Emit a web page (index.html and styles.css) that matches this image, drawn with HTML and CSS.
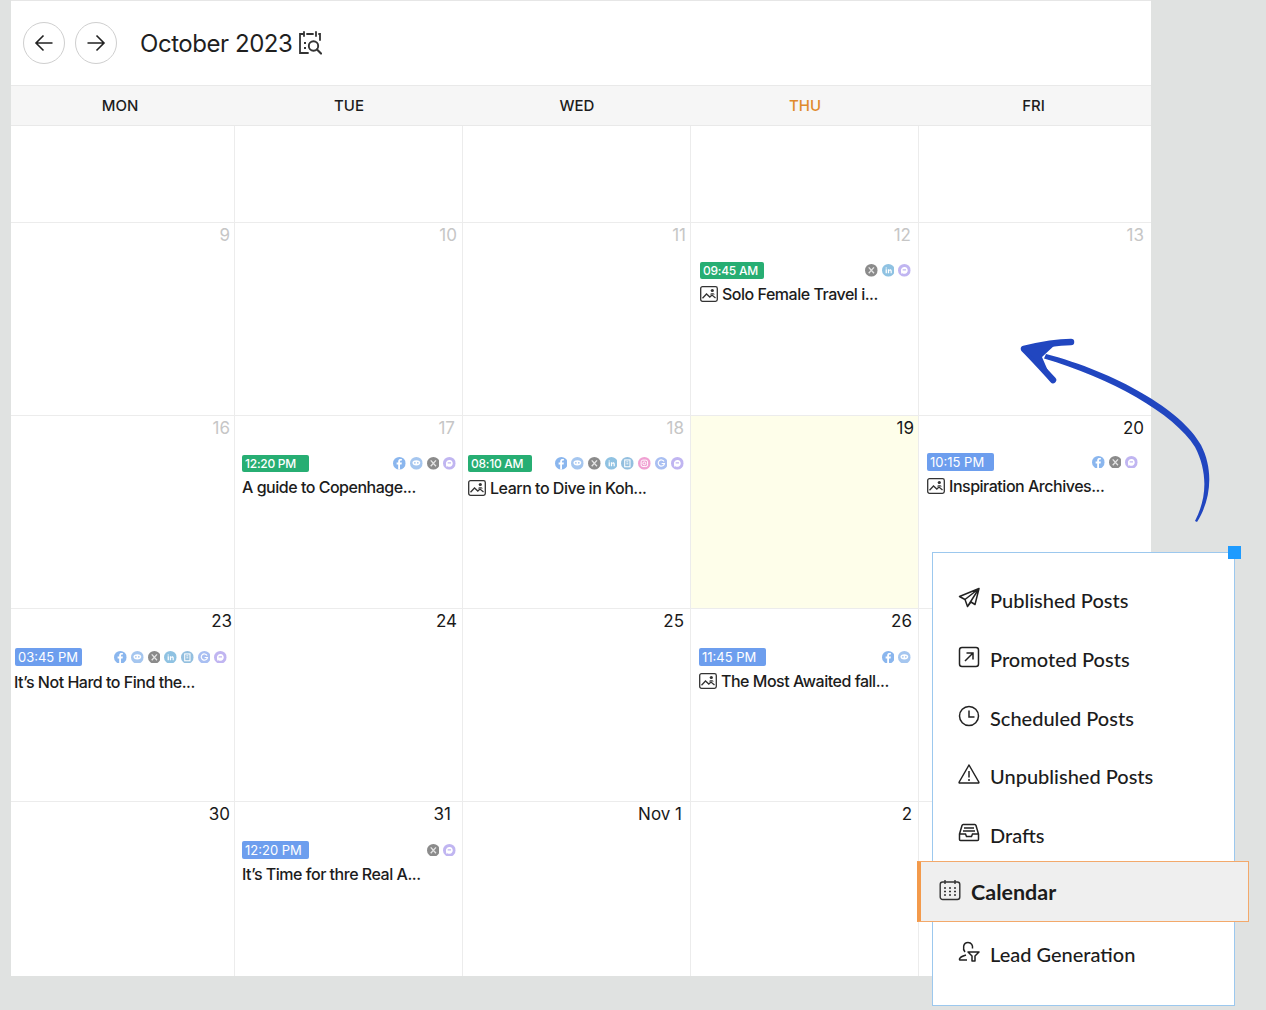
FILE: index.html
```html
<!DOCTYPE html>
<html lang="en">
<head>
<meta charset="utf-8">
<title>Calendar</title>
<link rel="stylesheet" href="styles.css">
</head>
<body>
<svg class="defs" width="0" height="0" aria-hidden="true">
  <symbol id="d-fb" viewBox="0 0 13 13"><circle cx="6.5" cy="6.5" r="6.5" fill="#8ab6ee"/><path d="M7.2 13V7.6h1.6l.3-1.9H7.2V4.6c0-.6.3-.9.9-.9h1V2.1C8.1 1.9 5.300 1.500 5.300 4.300v1.400H3.700v1.900h1.600V13z" fill="#fff"/></symbol>
  <symbol id="d-me" viewBox="0 0 13 13"><circle cx="6.500" cy="6.500" r="6.500" fill="#a5c6ef"/><ellipse cx="6.500" cy="6" rx="4" ry="2.600" fill="#fff"/><circle cx="5" cy="6" r=".9" fill="#a5c6ef"/><circle cx="8" cy="6" r=".9" fill="#a5c6ef"/></symbol>
  <symbol id="d-x" viewBox="0 0 13 13"><circle cx="6.500" cy="6.500" r="6.500" fill="#8b8b8b"/><path d="M3.800 3.500l5.400 6M9.200 3.500l-5.400 6" stroke="#e4e4e4" stroke-width="1.400"/></symbol>
  <symbol id="d-in" viewBox="0 0 13 13"><circle cx="6.500" cy="6.500" r="6.500" fill="#8fc2e2"/><path d="M3.700 5.500h1.300v4H3.700zM3.700 3.500h1.300v1.200H3.700zM6 5.500h1.200v.6c.7-1 2.800-1 2.800 1v2.400H8.800V7.400c0-1-1.500-1-1.500 0v2.100H6z" fill="#fff"/></symbol>
  <symbol id="d-gb" viewBox="0 0 13 13"><circle cx="6.500" cy="6.500" r="6.500" fill="#93bfdf"/><rect x="3.800" y="3" width="5.400" height="7" fill="none" stroke="#fff" stroke-width="1.100"/><path d="M5.500 5h2M5.500 7h2" stroke="#fff"/></symbol>
  <symbol id="d-ig" viewBox="0 0 13 13"><circle cx="6.500" cy="6.500" r="6.500" fill="#f0a0d2"/><rect x="3.200" y="3.200" width="6.600" height="6.600" rx="1.800" fill="none" stroke="#fff"/><circle cx="6.500" cy="6.500" r="1.500" fill="none" stroke="#fff"/></symbol>
  <symbol id="d-go" viewBox="0 0 13 13"><circle cx="6.500" cy="6.500" r="6.500" fill="#a9bff2"/><path d="M9.300 4.600A3.200 3.200 0 1 0 9.700 6.700H6.800" fill="none" stroke="#fff" stroke-width="1.200"/></symbol>
  <symbol id="d-ma" viewBox="0 0 13 13"><circle cx="6.500" cy="6.500" r="6.500" fill="#c0b5f1"/><path d="M3 6.500a3.500 3.500 0 1 1 1.500 2.900L3.300 10z" fill="#fff"/><path d="M4.800 6h3.400" stroke="#c0b5f1" stroke-width="1.100"/></symbol>
  <symbol id="i-img" viewBox="0 0 18 16"><rect x=".7" y=".7" width="16.600" height="14.600" rx="1.800" fill="none" stroke="#333" stroke-width="1.300"/><path d="M2.500 12.300l4-4.300 3.300 3 2.200-2 3.500 3" fill="none" stroke="#333" stroke-width="1.300"/><circle cx="12.300" cy="4.500" r="1.600" fill="#333"/><path d="M10 8.500c.3-1.700 4.300-1.700 4.800 0z" fill="#333"/></symbol>
</svg>

<div class="page">
  <main class="calendar">
    <header class="topbar">
      <button class="nav-btn" type="button" aria-label="Previous">
        <svg width="20" height="20" viewBox="0 0 20 20"><path d="M18.500 10H2M9.500 2.500L2 10l7.500 7.500" fill="none" stroke="#222" stroke-width="1.600"/></svg>
      </button>
      <button class="nav-btn" type="button" aria-label="Next">
        <svg width="20" height="20" viewBox="0 0 20 20"><path d="M1.500 10H18M10.500 2.500L18 10l-7.500 7.500" fill="none" stroke="#222" stroke-width="1.600"/></svg>
      </button>
      <h1 class="month">October 2023</h1>
      <svg class="month-icon" width="24" height="24" viewBox="0 0 24 24"><path d="M6 1v4M18 1v4M9 3h6M21 3h1v6M6 3H2v19h8" fill="none" stroke="#333" stroke-width="1.800" stroke-linecap="round"/><path d="M6 12h2M6 17h2" stroke="#333" stroke-width="2"/><circle cx="15.500" cy="15" r="4.700" fill="none" stroke="#333" stroke-width="1.900"/><path d="M19 18.500l4 4" stroke="#333" stroke-width="2.200" stroke-linecap="round"/></svg>
    </header>

    <div class="weekdays">
      <div class="wd">MON</div>
      <div class="wd">TUE</div>
      <div class="wd">WED</div>
      <div class="wd today">THU</div>
      <div class="wd">FRI</div>
    </div>

    <div class="grid">
      <div class="cell"></div><div class="cell"></div><div class="cell"></div><div class="cell"></div><div class="cell last"></div>

      <div class="cell c1"><div class="date past dm2">9</div></div>
      <div class="cell c2"><div class="date past">10</div></div>
      <div class="cell c3"><div class="date past d11">11</div></div>
      <div class="cell c4">
        <div class="date past dm1">12</div>
        <div class="event e12">
          <div class="ev-top"><span class="time green">09:45 AM</span><span class="dots"><svg class="dot"><use href="#d-x"/></svg><svg class="dot"><use href="#d-in"/></svg><svg class="dot"><use href="#d-ma"/></svg></span></div>
          <div class="ev-title"><svg class="img"><use href="#i-img"/></svg>Solo Female Travel i...</div>
        </div>
      </div>
      <div class="cell c5 last"><div class="date past">13</div></div>

      <div class="cell c1"><div class="date past dm2">16</div></div>
      <div class="cell c2">
        <div class="date past dm2">17</div>
        <div class="event">
          <div class="ev-top"><span class="time green">12:20 PM</span><span class="dots"><svg class="dot"><use href="#d-fb"/></svg><svg class="dot"><use href="#d-me"/></svg><svg class="dot"><use href="#d-x"/></svg><svg class="dot"><use href="#d-ma"/></svg></span></div>
          <div class="ev-title">A guide to Copenhage...</div>
        </div>
      </div>
      <div class="cell c3">
        <div class="date past">18</div>
        <div class="event">
          <div class="ev-top"><span class="time green t-short">08:10 AM</span><span class="dots"><svg class="dot"><use href="#d-fb"/></svg><svg class="dot"><use href="#d-me"/></svg><svg class="dot"><use href="#d-x"/></svg><svg class="dot"><use href="#d-in"/></svg><svg class="dot"><use href="#d-gb"/></svg><svg class="dot"><use href="#d-ig"/></svg><svg class="dot"><use href="#d-go"/></svg><svg class="dot"><use href="#d-ma"/></svg></span></div>
          <div class="ev-title low"><svg class="img"><use href="#i-img"/></svg>Learn to Dive in Koh...</div>
        </div>
      </div>
      <div class="cell c4 now"><div class="date d19">19</div></div>
      <div class="cell c5 last">
        <div class="date">20</div>
        <div class="event e20">
          <div class="ev-top"><span class="time blue">10:15 PM</span><span class="dots"><svg class="dot"><use href="#d-fb"/></svg><svg class="dot"><use href="#d-x"/></svg><svg class="dot"><use href="#d-ma"/></svg></span></div>
          <div class="ev-title"><svg class="img"><use href="#i-img"/></svg>Inspiration Archives...</div>
        </div>
      </div>

      <div class="cell c1">
        <div class="date">23</div>
        <div class="event">
          <div class="ev-top"><span class="time blue">03:45 PM</span><span class="dots"><svg class="dot"><use href="#d-fb"/></svg><svg class="dot"><use href="#d-me"/></svg><svg class="dot"><use href="#d-x"/></svg><svg class="dot"><use href="#d-in"/></svg><svg class="dot"><use href="#d-gb"/></svg><svg class="dot"><use href="#d-go"/></svg><svg class="dot"><use href="#d-ma"/></svg></span></div>
          <div class="ev-title low">It’s Not Hard to Find the...</div>
        </div>
      </div>
      <div class="cell c2"><div class="date">24</div></div>
      <div class="cell c3"><div class="date">25</div></div>
      <div class="cell c4">
        <div class="date">26</div>
        <div class="event">
          <div class="ev-top"><span class="time blue">11:45 PM</span><span class="dots"><svg class="dot"><use href="#d-fb"/></svg><svg class="dot"><use href="#d-me"/></svg></span></div>
          <div class="ev-title"><svg class="img"><use href="#i-img"/></svg>The Most Awaited fall...</div>
        </div>
      </div>
      <div class="cell c5 last"></div>

      <div class="cell c1 end"><div class="date dm2">30</div></div>
      <div class="cell c2 end">
        <div class="date d31">31</div>
        <div class="event">
          <div class="ev-top"><span class="time blue">12:20 PM</span><span class="dots"><svg class="dot"><use href="#d-x"/></svg><svg class="dot"><use href="#d-ma"/></svg></span></div>
          <div class="ev-title">It’s Time for thre Real A...</div>
        </div>
      </div>
      <div class="cell c3 end"><div class="date dm2">Nov 1</div></div>
      <div class="cell c4 end"><div class="date">2</div></div>
      <div class="cell c5 last end"></div>
    </div>
  </main>

  <aside class="menu">
    <span class="handle"></span>
    <div class="item">
      <svg class="mi" viewBox="0 0 22 22"><path d="M21 1.500L1.500 9.500l5.500 3 2.500 7 3.500-4.500 4 2.500zM21 1.500L7 12.500M21 1.500L9.500 19.500" fill="none" stroke="#222" stroke-width="1.500" stroke-linejoin="round"/></svg>
      <span>Published Posts</span>
    </div>
    <div class="item">
      <svg class="mi" viewBox="0 0 22 22"><rect x="1.500" y="1.500" width="19" height="19" rx="2.500" fill="none" stroke="#222" stroke-width="1.500"/><path d="M7 15l8-8M8.500 7H15v6.500" fill="none" stroke="#222" stroke-width="1.500"/></svg>
      <span>Promoted Posts</span>
    </div>
    <div class="item">
      <svg class="mi" viewBox="0 0 22 22"><circle cx="11" cy="11" r="9.500" fill="none" stroke="#222" stroke-width="1.500"/><path d="M11 5.500V12h5.500" fill="none" stroke="#222" stroke-width="1.500"/></svg>
      <span>Scheduled Posts</span>
    </div>
    <div class="item">
      <svg class="mi" viewBox="0 0 22 22"><path d="M11 2L1.200 19c-.3.600 0 1 .6 1h18.400c.6 0 .9-.4.600-1z" fill="none" stroke="#222" stroke-width="1.500" stroke-linejoin="round"/><path d="M11 8v6.500" stroke="#222" stroke-width="1.500"/><circle cx="11" cy="17" r="1" fill="#222"/></svg>
      <span>Unpublished Posts</span>
    </div>
    <div class="item">
      <svg class="mi" viewBox="0 0 22 22"><path d="M1.500 12l2.500-8.500c.2-.6.600-1 1.200-1h11.600c.6 0 1 .4 1.200 1L20.500 12v5.500c0 .6-.5 1-1 1h-17c-.5 0-1-.4-1-1zM1.500 12h6l1 2.500h5l1-2.500h6M6 6h10M5 9h12" fill="none" stroke="#222" stroke-width="1.500"/></svg>
      <span>Drafts</span>
    </div>
    <div class="item active">
      <svg class="mi" viewBox="0 0 22 22"><rect x="1.200" y="3" width="19.600" height="17.500" rx="2.500" fill="none" stroke="#333" stroke-width="1.400"/><path d="M6 1v4M16 1v4" stroke="#333" stroke-width="1.400"/><path d="M5 9h2M10 9h2M15 9h2M5 12.500h2M10 12.500h2M15 12.500h2M5 16h2M10 16h2M15 16h2" stroke="#333" stroke-width="1.600"/></svg>
      <span>Calendar</span>
    </div>
    <div class="item lead">
      <svg class="mi" viewBox="0 0 22 22"><path d="M8 14c-3 1-6 1.500-6.500 4-.1.600.2 1 .7 1H9M7 11C4.500 8 5 1.500 10 1.500c3.500 0 5 3 4.500 6" fill="none" stroke="#222" stroke-width="1.500"/><path d="M10 11h11l-4 4v5h-3v-5z" fill="none" stroke="#222" stroke-width="1.500" stroke-linejoin="round"/></svg>
      <span>Lead Generation</span>
    </div>
  </aside>

  <svg class="arrow" width="1266" height="1010" viewBox="0 0 1266 1010">
    <path d="M1197 522C1211 500 1214 470 1201 445C1182 410 1115 372 1046 354L1044 358.500C1110 378 1174 413 1195 447C1208 472 1207 498 1195 521Z" fill="#2146c0"/>
    <path d="M1071 342C1055 342 1040 345 1024 349C1033 358 1043 369 1053 380" fill="none" stroke="#2146c0" stroke-width="6.500" stroke-linecap="round" stroke-linejoin="round"/>
    <path d="M1024 349L1056 344L1042 357L1048 371Z" fill="#2146c0"/>
  </svg>
</div>
</body>
</html>
```

FILE: styles.css
```css
* { box-sizing: border-box; }
html, body { margin: 0; padding: 0; }
body { background: #e0e2e1; font-family: "Inter", "Liberation Sans", sans-serif; color: #1c1c1c; overflow: hidden; }
.defs { position: absolute; }
.page { position: relative; width: 1266px; height: 1010px; padding-left: 11px; }

.calendar { width: 1140px; height: 976px; background: #fff; border-top: 1px solid #e6e6e6; display: flex; flex-direction: column; }

.topbar { height: 84px; display: flex; align-items: center; padding: 0 0 0 12px; gap: 10px; }
.nav-btn { width: 42px; height: 42px; border: 1px solid #cfcfcf; border-radius: 50%; background: #fff; padding: 0; display: flex; align-items: center; justify-content: center; }
.month { margin: 0 6px 0 13px; font-size: 24px; font-weight: 400; letter-spacing: -0.45px; color: #1f1f1f; }
.month-icon { margin-left: -10px; }

.weekdays { display: grid; grid-template-columns: 224px 228px 228px 228px 232px; height: 41px; background: #f6f6f6; border-top: 1px solid #e9e9e9; border-bottom: 1px solid #e9e9e9; }
.wd { display: flex; align-items: center; justify-content: center; font-size: 15px; font-weight: 500; color: #1c1c1c; }
.wd:first-child { padding-right: 6px; }
.wd:last-child { padding-right: 3px; }
.today { color: #e08a2c; }

.grid { flex: 1; display: grid; grid-template-columns: 224px 228px 228px 228px 232px; grid-template-rows: 97px 193px 193px 193px 174px; }
.cell { border-right: 1px solid #ececec; border-bottom: 1px solid #ececec; padding-right: 6px; display: flex; flex-direction: column; }
.cell.last { border-right: 0; padding-right: 7px; }
.cell.end { border-bottom: 0; }
.c1 { padding-left: 4px; padding-right: 2px; }
.c2 { padding-left: 7px; padding-right: 5px; }
.c3 { padding-left: 5px; }
.c4 { padding-left: 8px; }
.c5 { padding-left: 8px; }
.now { background: #fefeea; }

.date { height: 24px; font-size: 17px; line-height: 24px; text-align: right; color: #1a1a1a; }
.date.past { color: #c6c6c6; }
.dm1 { margin-right: 1px; }
.dm2 { margin-right: 2px; }
.d11 { margin-right: -2px; }
.d19 { margin-right: -2px; }
.d31 { margin-right: 6px; }

.event { margin-top: 15px; }
.ev-top { display: flex; align-items: center; justify-content: space-between; }
.c1 .event { margin-right: 5px; }
.c2 .event { margin-right: 1px; }
.c4 .event { margin-right: 1px; }
.c5 .event { margin-right: 6px; }
.e12 { margin-top: 15px; margin-left: 1px; }
.e20 { margin-top: 13px; }

.time { width: 67px; height: 17px; border-radius: 2px; color: #fff; font-size: 12px; line-height: 17px; padding-left: 3px; letter-spacing: -0.25px; font-weight: 500; white-space: nowrap; }
.t-short { width: 64px; }
.e12 .time { width: 64px; }
.green { background: #27ae73; }
.blue { background: #6d9eee; height: 18px; line-height: 18px; font-size: 13px; font-weight: 400; letter-spacing: 0; }

.dots { display: flex; gap: 4px; }
.dot { width: 12.700px; height: 12.700px; display: block; }

.ev-title { display: flex; align-items: center; height: 22px; margin-top: 4px; font-size: 16px; font-weight: 500; letter-spacing: -0.48px; color: #1c1c1c; white-space: nowrap; }
.ev-title.low { margin-top: 5px; }
.c1 .ev-title { margin-left: -1px; }
.img { width: 18px; height: 16px; margin-right: 4px; flex: none; }

.menu { position: absolute; left: 932px; top: 552px; width: 303px; height: 454px; background: #fff; border: 1px solid #9cc8ee; padding-top: 18px; font-family: "Lato", "Liberation Sans", sans-serif; font-weight: 500; color: #1c1c1c; }
.handle { position: absolute; right: -7px; top: -7px; width: 13px; height: 13px; background: #1e9bff; }
.item { height: 58.700px; display: flex; align-items: center; padding-left: 25px; font-size: 20px; gap: 10px; }
.mi { width: 22px; height: 22px; flex: none; position: relative; top: -2px; }
.item.active { height: 61px; margin: -3px -15px 0 -16px; padding-left: 18px; background: #efefef; border: 1px solid #f3a96b; border-left: 4px solid #f39a4b; font-size: 21.500px; font-weight: 700; gap: 10px; }
.item.lead { margin-top: 2px; }

.arrow { position: absolute; left: 0; top: 0; pointer-events: none; }
```
